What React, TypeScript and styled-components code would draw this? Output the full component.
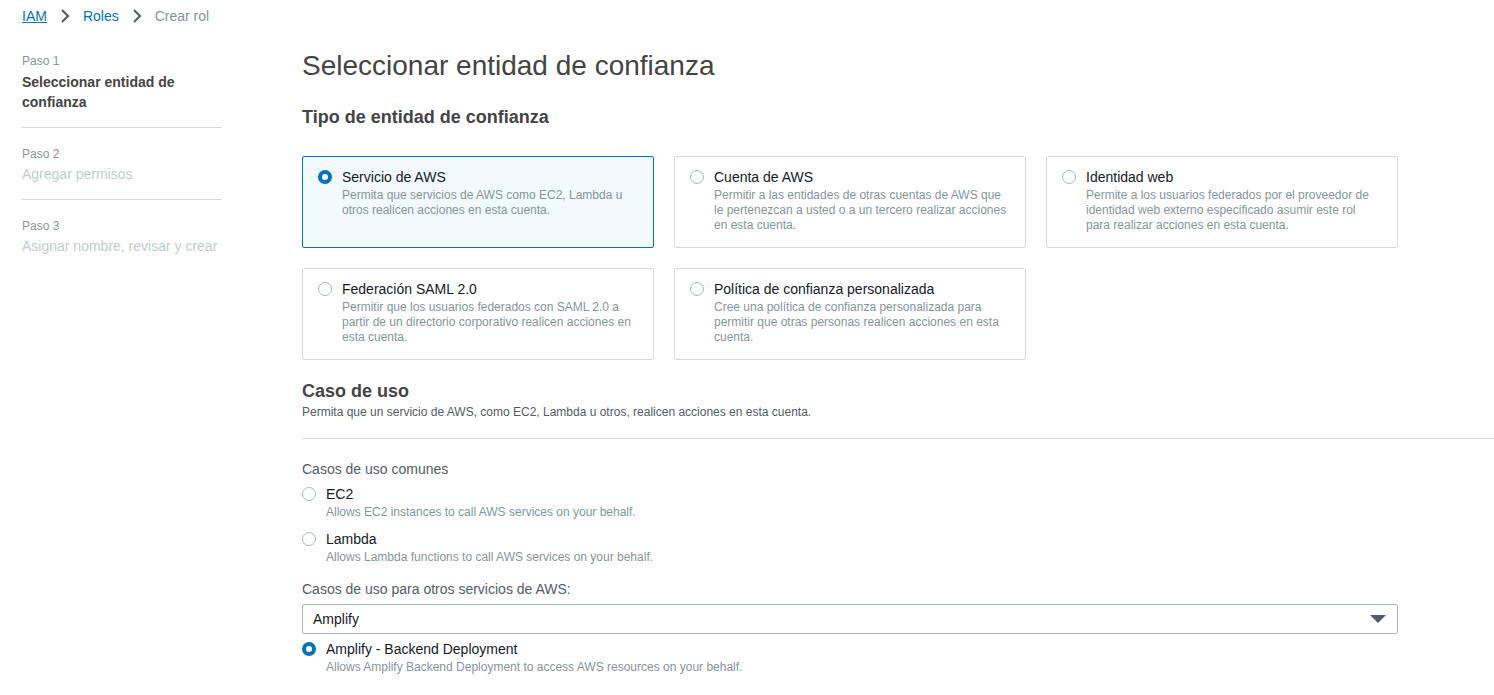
import React from "react";
import styled, { createGlobalStyle } from "styled-components";

const GlobalStyle = createGlobalStyle`
  body {
    margin: 0;
    background: #ffffff;
    font-family: "Liberation Sans", Arial, sans-serif;
    color: #16191f;
  }
`;

const trustTypes = [
  {
    title: "Servicio de AWS",
    desc: "Permita que servicios de AWS como EC2, Lambda u otros realicen acciones en esta cuenta.",
    selected: true,
  },
  {
    title: "Cuenta de AWS",
    desc: "Permitir a las entidades de otras cuentas de AWS que le pertenezcan a usted o a un tercero realizar acciones en esta cuenta.",
  },
  {
    title: "Identidad web",
    desc: "Permite a los usuarios federados por el proveedor de identidad web externo especificado asumir este rol para realizar acciones en esta cuenta.",
  },
  {
    title: "Federación SAML 2.0",
    desc: "Permitir que los usuarios federados con SAML 2.0 a partir de un directorio corporativo realicen acciones en esta cuenta.",
  },
  {
    title: "Política de confianza personalizada",
    desc: "Cree una política de confianza personalizada para permitir que otras personas realicen acciones en esta cuenta.",
  },
];

const Chevron = () => (
  <svg width="16" height="16" viewBox="0 0 16 16" fill="none">
    <path d="M5 2l6 6-6 6" stroke="#545b64" strokeWidth="2" />
  </svg>
);

export default function App() {
  return (
    <>
      <GlobalStyle />
      <Breadcrumbs>
        <CrumbLink>IAM</CrumbLink>
        <Sep>
          <Chevron />
        </Sep>
        <CrumbPlain>Roles</CrumbPlain>
        <Sep>
          <Chevron />
        </Sep>
        <CrumbCurrent>Crear rol</CrumbCurrent>
      </Breadcrumbs>
      <Layout>
        <Sidebar>
          <Step>
            <StepNum $active>Paso 1</StepNum>
            <StepTitle $active>Seleccionar entidad de confianza</StepTitle>
          </Step>
          <Step>
            <StepNum>Paso 2</StepNum>
            <StepTitle>Agregar permisos</StepTitle>
          </Step>
          <Step $last>
            <StepNum>Paso 3</StepNum>
            <StepTitle>Asignar nombre, revisar y crear</StepTitle>
          </Step>
        </Sidebar>
        <Main>
          <PageTitle>Seleccionar entidad de confianza</PageTitle>
          <SectionTitle>Tipo de entidad de confianza</SectionTitle>
          <CardGrid>
            {trustTypes.map((t) => (
              <Card key={t.title} $selected={t.selected}>
                <Radio $checked={t.selected} />
                <CardText>
                  <CardTitle>{t.title}</CardTitle>
                  <CardDesc>{t.desc}</CardDesc>
                </CardText>
              </Card>
            ))}
          </CardGrid>
          <UseCaseTitle>Caso de uso</UseCaseTitle>
          <UseCaseDesc>
            Permita que un servicio de AWS, como EC2, Lambda u otros, realicen acciones en esta
            cuenta.
          </UseCaseDesc>
          <Divider />
          <FieldLabel>Casos de uso comunes</FieldLabel>
          <Option $first>
            <Radio />
            <CardText>
              <OptionTitle>EC2</OptionTitle>
              <OptionDesc>Allows EC2 instances to call AWS services on your behalf.</OptionDesc>
            </CardText>
          </Option>
          <Option>
            <Radio />
            <CardText>
              <OptionTitle>Lambda</OptionTitle>
              <OptionDesc>Allows Lambda functions to call AWS services on your behalf.</OptionDesc>
            </CardText>
          </Option>
          <FieldLabel $spaced>Casos de uso para otros servicios de AWS:</FieldLabel>
          <Select>
            <span>Amplify</span>
            <Caret />
          </Select>
          <Option $first>
            <Radio $checked />
            <CardText>
              <OptionTitle>Amplify - Backend Deployment</OptionTitle>
              <OptionDesc>
                Allows Amplify Backend Deployment to access AWS resources on your behalf.
              </OptionDesc>
            </CardText>
          </Option>
        </Main>
      </Layout>
    </>
  );
}

const Breadcrumbs = styled.nav`
  display: flex;
  align-items: center;
  padding: 6px 22px 0;
  font-size: 14px;
  line-height: 20px;
`;

const CrumbLink = styled.a`
  color: #0073bb;
  text-decoration: underline;
`;

const CrumbPlain = styled.a`
  color: #0073bb;
`;

const CrumbCurrent = styled.span`
  color: #879596;
`;

const Sep = styled.span`
  width: 36px;
  display: flex;
  justify-content: center;
  align-items: center;
`;

const Layout = styled.div`
  display: flex;
  gap: 80px;
  padding: 22px 0 0 22px;
`;

const Sidebar = styled.aside`
  width: 200px;
  flex-shrink: 0;
  padding-top: 5px;
`;

const Step = styled.div<{ $last?: boolean }>`
  padding: 0 0 15px;
  border-bottom: 1px solid #d5dbdb;
  & + & {
    padding-top: 18px;
  }
  ${(p) => p.$last && "border-bottom: none;"}
`;

const StepNum = styled.div<{ $active?: boolean }>`
  font-size: 12px;
  line-height: 16px;
  color: #879596;
  margin-bottom: ${(p) => (p.$active ? "3px" : "2px")};
`;

const StepTitle = styled.div<{ $active?: boolean }>`
  font-size: 14px;
  line-height: 20px;
  font-weight: ${(p) => (p.$active ? 700 : 400)};
  color: ${(p) => (p.$active ? "#444444" : "#c4cbcc")};
`;

const Main = styled.main`
  flex: 1;
  min-width: 0;
`;

const PageTitle = styled.h1`
  margin: 0;
  font-size: 28px;
  line-height: 36px;
  font-weight: 400;
  color: #444444;
`;

const SectionTitle = styled.h2`
  margin: 21px 0 27px;
  font-size: 18px;
  line-height: 24px;
  font-weight: 700;
  color: #444444;
`;

const CardGrid = styled.div`
  display: grid;
  grid-template-columns: repeat(3, 352px);
  gap: 20px;
`;

const Card = styled.div<{ $selected?: boolean }>`
  display: flex;
  gap: 10px;
  padding: 10px 15px 14px;
  border: 1px solid ${(p) => (p.$selected ? "#0073bb" : "#d5dbdb")};
  background: ${(p) => (p.$selected ? "#f1faff" : "#ffffff")};
  border-radius: 2px;
`;

const Radio = styled.span<{ $checked?: boolean }>`
  box-sizing: border-box;
  flex-shrink: 0;
  width: 14px;
  height: 14px;
  margin-top: 3px;
  border-radius: 50%;
  background: #ffffff;
  border: ${(p) => (p.$checked ? "4px solid #0073bb" : "1px solid #aab7b8")};
`;

const CardText = styled.div`
  display: flex;
  flex-direction: column;
`;

const CardTitle = styled.div`
  font-size: 14px;
  line-height: 20px;
  color: #16191f;
`;

const CardDesc = styled.div`
  margin-top: 1px;
  font-size: 12px;
  line-height: 15px;
  color: #879596;
`;

const UseCaseTitle = styled.h2`
  margin: 19px 0 1px;
  font-size: 18px;
  line-height: 24px;
  font-weight: 700;
  color: #444444;
`;

const UseCaseDesc = styled.p`
  margin: 0;
  font-size: 12px;
  line-height: 16px;
  color: #545b64;
`;

const Divider = styled.hr`
  margin: 18px 0 0;
  border: none;
  border-top: 1px solid #d5dbdb;
`;

const FieldLabel = styled.div<{ $spaced?: boolean }>`
  margin-top: ${(p) => (p.$spaced ? "15px" : "20px")};
  font-size: 14px;
  line-height: 20px;
  color: #545b64;
`;

const Option = styled.div<{ $first?: boolean }>`
  display: flex;
  gap: 10px;
  margin-top: ${(p) => (p.$first ? "5px" : "10px")};
`;

const OptionTitle = styled.div`
  font-size: 14px;
  line-height: 20px;
  color: #16191f;
`;

const OptionDesc = styled.div`
  font-size: 12px;
  line-height: 14px;
  margin-top: 1px;
  color: #879596;
`;

const Select = styled.div`
  box-sizing: border-box;
  width: 1096px;
  height: 30px;
  margin-top: 5px;
  padding: 0 10px;
  display: flex;
  align-items: center;
  justify-content: space-between;
  border: 1px solid #aab7b8;
  border-radius: 2px;
  font-size: 14px;
  color: #16191f;
`;

const Caret = styled.span`
  width: 0;
  height: 0;
  margin-right: 1px;
  border-left: 8px solid transparent;
  border-right: 8px solid transparent;
  border-top: 8px solid #545b64;
`;
